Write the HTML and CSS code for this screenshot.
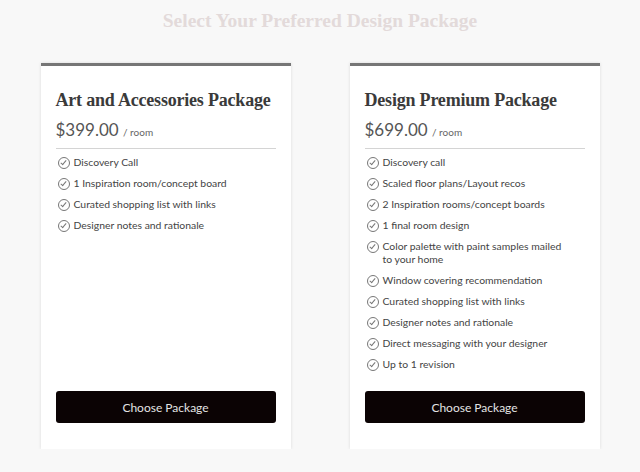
FILE: index.html
```html
<!DOCTYPE html>
<html>
<head>
<meta charset="UTF-8">
<link rel="stylesheet" href="styles.css">
</head>
<body>
	<h1 class="page-title">Select Your Preferred Design Package</h1>
	<div class="packages">
		<div class="card">
			<h2 class="card-title">Art and Accessories Package</h2>
			<div class="price">$399.00 <span class="unit">/ room</span></div>
			<ul class="features">
				<li>Discovery Call</li>
				<li>1 Inspiration room/concept board</li>
				<li>Curated shopping list with links</li>
				<li>Designer notes and rationale</li>
			</ul>
			<button class="choose">Choose Package</button>
		</div>
		<div class="card">
			<h2 class="card-title">Design Premium Package</h2>
			<div class="price">$699.00 <span class="unit">/ room</span></div>
			<ul class="features">
				<li>Discovery call</li>
				<li>Scaled floor plans/Layout recos</li>
				<li>2 Inspiration rooms/concept boards</li>
				<li>1 final room design</li>
				<li>Color palette with paint samples mailed to your home</li>
				<li>Window covering recommendation</li>
				<li>Curated shopping list with links</li>
				<li>Designer notes and rationale</li>
				<li>Direct messaging with your designer</li>
				<li>Up to 1 revision</li>
			</ul>
			<button class="choose">Choose Package</button>
		</div>
	</div>
</body>
</html>
```
FILE: styles.css
```css
body {
	margin		: 0;
	background-color: #f8f8f8;
	font-family	: Lato, "Noto Sans", sans-serif;
}
.page-title {
	margin		: 10px 0 0;
	text-align	: center;
	font-family	: "Liberation Serif", serif;
	font-weight	: bold;
	font-size	: 19.5px;
	color		: #e3dada;
}
.packages {
	display		: flex;
	justify-content	: center;
	gap		: 59px;
	margin-top	: 31px;
}
.card {
	width		: 250px;
	box-sizing	: border-box;
	background	: #fff;
	border-top	: 3px solid #767676;
	box-shadow	: 0 0 3px rgba(0,0,0,0.12);
	padding		: 22px 15px 26px;
	display		: flex;
	flex-direction	: column;
}
.card-title {
	margin		: 0;
	font-family	: "Liberation Serif", serif;
	font-weight	: bold;
	font-size	: 18px;
	letter-spacing	: -0.2px;
	white-space	: nowrap;
	color		: #3a3a3a;
	line-height	: 24px;
}
.price {
	margin-top	: 7px;
	font-size	: 17px;
	color		: #555;
	line-height	: 22px;
	padding-bottom	: 5px;
	border-bottom	: 1px solid #d4d4d4;
}
.unit {
	font-size	: 10px;
	color		: #666;
}
.features {
	list-style	: none;
	margin		: 7px 0 12px;
	padding		: 0;
	flex-grow	: 1;
}
.features li {
	position	: relative;
	padding-left	: 18px;
	font-size	: 10.4px;
	line-height	: 13px;
	color		: #444;
	margin-bottom	: 8px;
	padding-right	: 12px;
}
.features li::before {
	content		: '';
	position	: absolute;
	left		: 2px;
	top		: 1px;
	width		: 10px;
	height		: 10px;
	border		: 1px solid #777;
	border-radius	: 50%;
}
.features li::after {
	content		: '';
	position	: absolute;
	left		: 6px;
	top		: 3px;
	width		: 2px;
	height		: 5px;
	border-right	: 1px solid #777;
	border-bottom	: 1px solid #777;
	transform	: rotate(40deg);
}
.choose {
	height		: 32px;
	border		: 0;
	border-radius	: 3px;
	background	: #0b0304;
	color		: #e4e4e4;
	font-family	: Lato, "Noto Sans", sans-serif;
	font-size	: 12px;
}
```
